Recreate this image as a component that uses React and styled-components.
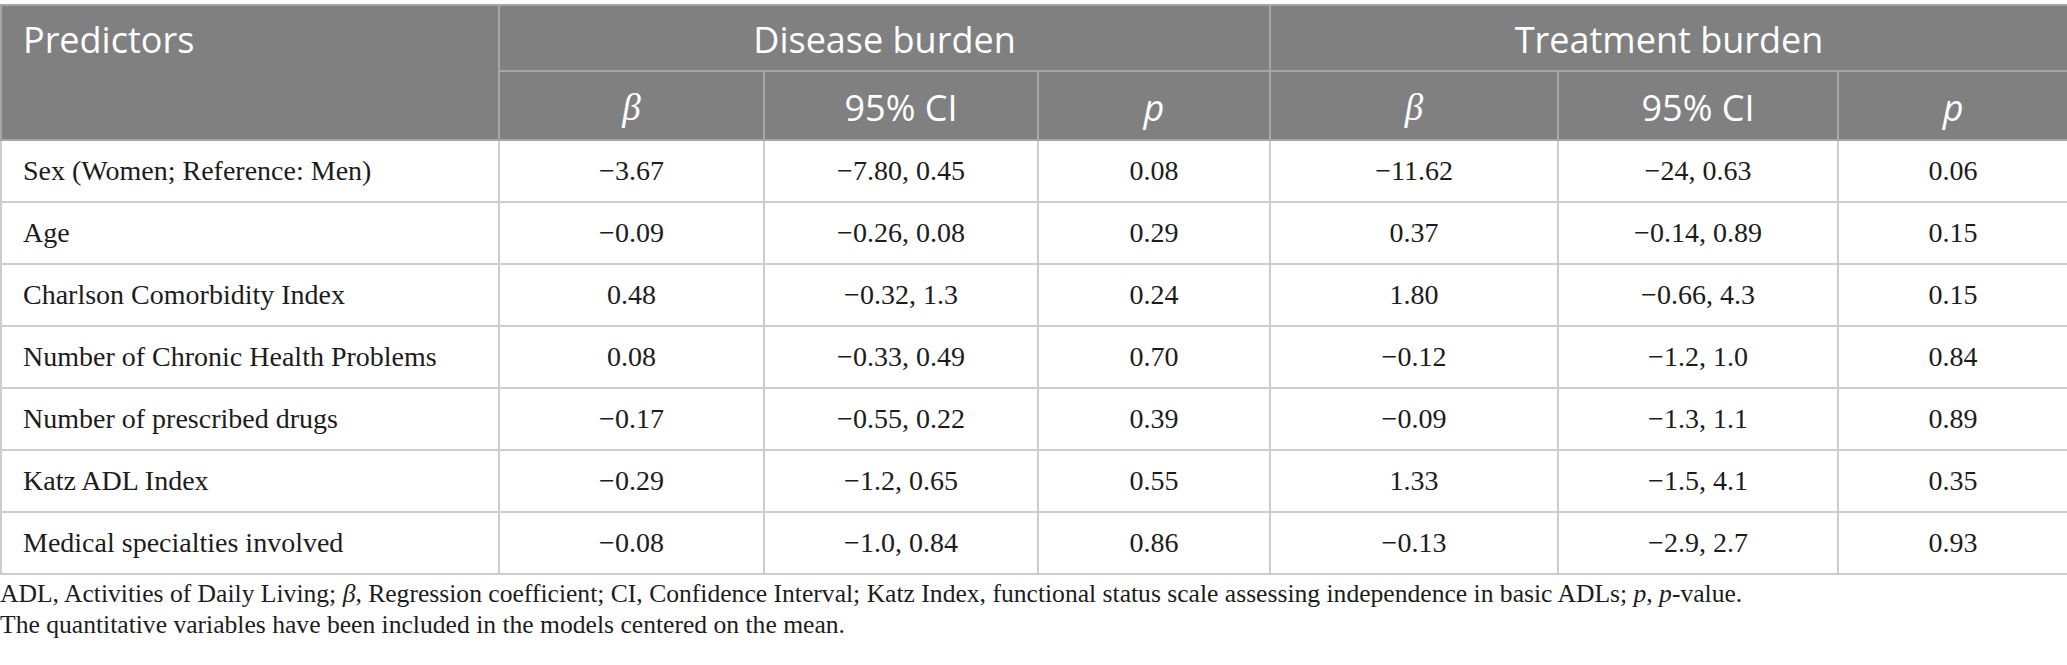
import React from 'react'
import styled, { createGlobalStyle } from 'styled-components'

const GlobalStyle = createGlobalStyle`
  html, body {
    margin: 0;
    padding: 0;
    background: #ffffff;
  }
  body {
    padding-top: 4px;
  }
`

const headFont = `'Open Sans', 'Noto Sans', sans-serif`
const bodyFont = `'Liberation Serif', 'Times New Roman', serif`

const Table = styled.table`
  width: 2067px;
  border-collapse: collapse;
  table-layout: fixed;
  border: 2px solid #c4c4c4;
`

const HeadCell = styled.th`
  background: #808080;
  color: #ffffff;
  font-family: ${headFont};
  font-weight: 400;
  font-size: 36px;
  line-height: 42px;
  text-align: ${p => (p.$left ? 'left' : 'center')};
  vertical-align: ${p => (p.$top ? 'top' : 'middle')};
  padding: ${p => (p.$top ? '13px 21px 0' : '4px 10px 0')};
  height: ${p => p.$h || 66}px;
  border: 2px solid #a6a6a6;
  box-sizing: border-box;
`

const Greek = styled.span`
  font-family: ${bodyFont};
  font-style: italic;
  font-size: 37px;
`

const ItalicP = styled.span`
  font-style: italic;
`

const Cell = styled.td`
  font-family: ${bodyFont};
  font-size: 28px;
  color: #1c1c1c;
  text-align: ${p => (p.$left ? 'left' : 'center')};
  padding: ${p => (p.$left ? '0 21px' : '0 10px')};
  height: 62px;
  border: 2px solid #cdcdcd;
  white-space: nowrap;
  box-sizing: border-box;
`

const Notes = styled.div`
  font-family: ${bodyFont};
  font-size: 25.6px;
  line-height: 31px;
  color: #1c1c1c;
  padding-top: 3px;
`

const widths = [498, 265, 274, 232, 288, 280, 230]

const rows = [
  ['Sex (Women; Reference: Men)', '−3.67', '−7.80, 0.45', '0.08', '−11.62', '−24, 0.63', '0.06'],
  ['Age', '−0.09', '−0.26, 0.08', '0.29', '0.37', '−0.14, 0.89', '0.15'],
  ['Charlson Comorbidity Index', '0.48', '−0.32, 1.3', '0.24', '1.80', '−0.66, 4.3', '0.15'],
  ['Number of Chronic Health Problems', '0.08', '−0.33, 0.49', '0.70', '−0.12', '−1.2, 1.0', '0.84'],
  ['Number of prescribed drugs', '−0.17', '−0.55, 0.22', '0.39', '−0.09', '−1.3, 1.1', '0.89'],
  ['Katz ADL Index', '−0.29', '−1.2, 0.65', '0.55', '1.33', '−1.5, 4.1', '0.35'],
  ['Medical specialties involved', '−0.08', '−1.0, 0.84', '0.86', '−0.13', '−2.9, 2.7', '0.93'],
]

const SubHeads = () => (
  <>
    <HeadCell $h={69}><Greek>β</Greek></HeadCell>
    <HeadCell $h={69}>95% CI</HeadCell>
    <HeadCell $h={69}><ItalicP>p</ItalicP></HeadCell>
  </>
)

const App = () => (
  <>
    <GlobalStyle />
    <Table>
      <colgroup>
        {widths.map((w, i) => <col key={i} style={{ width: w }} />)}
      </colgroup>
      <thead>
        <tr>
          <HeadCell rowSpan={2} $left $top>Predictors</HeadCell>
          <HeadCell colSpan={3}>Disease burden</HeadCell>
          <HeadCell colSpan={3}>Treatment burden</HeadCell>
        </tr>
        <tr>
          <SubHeads />
          <SubHeads />
        </tr>
      </thead>
      <tbody>
        {rows.map(r => (
          <tr key={r[0]}>
            {r.map((v, i) => (
              <Cell key={i} $left={i === 0}>{v}</Cell>
            ))}
          </tr>
        ))}
      </tbody>
    </Table>
    <Notes>
      ADL, Activities of Daily Living; <i>β</i>, Regression coefficient; CI, Confidence Interval; Katz Index, functional status scale assessing independence in basic ADLs; <i>p</i>, <i>p</i>-value.
      <br />
      The quantitative variables have been included in the models centered on the mean.
    </Notes>
  </>
)

export default App
